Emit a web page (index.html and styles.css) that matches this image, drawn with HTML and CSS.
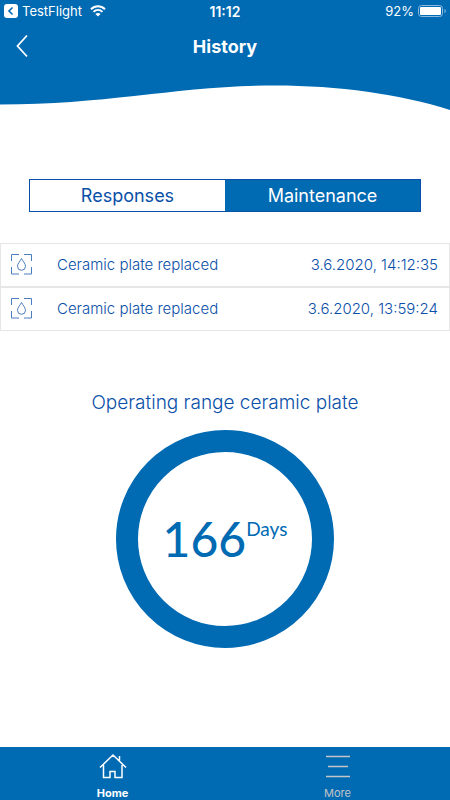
FILE: index.html
```html
<!DOCTYPE html>
<html lang="en">
<head>
    <meta charset="UTF-8">
    <meta name="viewport" content="width=device-width, initial-scale=1.0">
    <title>History</title>
    <link rel="stylesheet" href="styles.css">
</head>
<body>
    <header class="header">
        <div class="status-bar">
            <div class="status-left">
                <svg class="return-icon" viewBox="0 0 14 14" width="14" height="14">
                    <rect width="14" height="14" rx="3" fill="#fff"/>
                    <path d="M8.5 3.5L5 7l3.5 3.5" fill="none" stroke="#006ab3" stroke-width="1.6"/>
                </svg>
                <span>TestFlight</span>
                <svg class="wifi-icon" viewBox="0 0 16 12" width="16" height="12">
                    <path d="M1 4.2C5 .2 11 .2 15 4.2M3.5 6.9c2.6-2.5 6.4-2.5 9 0" fill="none" stroke="#fff" stroke-width="2"/>
                    <path d="M8 11.6L5.4 9c1.4-1.4 3.8-1.4 5.2 0z" fill="#fff"/>
                </svg>
            </div>
            <span class="clock">11:12</span>
            <div class="status-right">
                <span>92%</span>
                <svg viewBox="0 0 28 13" width="28" height="13">
                    <rect x=".5" y=".5" width="24" height="11" rx="3" fill="none" stroke="#8dbbe0"/>
                    <rect x="2" y="2" width="21" height="8" rx="1" fill="#fff"/>
                    <path d="M26.5 4v4c1.7-.6 1.7-3.4 0-4z" fill="#8dbbe0"/>
                </svg>
            </div>
        </div>
        <div class="nav-bar">
            <button class="back-button" type="button" aria-label="Back">
                <svg viewBox="0 0 12 24" width="12" height="24">
                    <path d="M11 1.5L1.5 12 11 22.5" fill="none" stroke="#fff" stroke-width="1.8"/>
                </svg>
            </button>
            <h1>History</h1>
        </div>
    </header>
    <svg class="wave" viewBox="0 0 450 40" preserveAspectRatio="none">
        <path d="M0 0H450V40C400 24 338 15.500 275 15.500C180 15.500 110 34.500 0 34.500Z" fill="#006ab3"/>
    </svg>

    <main>
        <div class="segments">
            <button class="segment" type="button">Responses</button>
            <button class="segment active" type="button">Maintenance</button>
        </div>

        <ul class="log">
            <li class="log-item">
                <svg class="log-icon" viewBox="0 0 21 21" width="21" height="21">
                    <path d="M.5 7V.5H8M13 .5h7.500V7M.5 13v7H8M13 20h7.500V13"/>
                    <path d="M10.500 4.500C9 7.500 6.500 9.700 6.500 12.300a4 4 0 0 0 8 0C14.500 9.700 12 7.500 10.500 4.500z"/>
                </svg>
                <span>Ceramic plate replaced</span>
                <time datetime="2020-06-03T14:12:35">3.6.2020, 14:12:35</time>
            </li>
            <li class="log-item">
                <svg class="log-icon" viewBox="0 0 21 21" width="21" height="21">
                    <path d="M.5 7V.5H8M13 .5h7.500V7M.5 13v7H8M13 20h7.500V13"/>
                    <path d="M10.500 4.500C9 7.500 6.500 9.700 6.500 12.300a4 4 0 0 0 8 0C14.500 9.700 12 7.500 10.500 4.500z"/>
                </svg>
                <span>Ceramic plate replaced</span>
                <time datetime="2020-06-03T13:59:24">3.6.2020, 13:59:24</time>
            </li>
        </ul>

        <section class="range">
            <h2>Operating range ceramic plate</h2>
            <div class="ring">
                <span class="days">166</span>
                <span class="unit">Days</span>
            </div>
        </section>
    </main>

    <nav class="tab-bar">
        <a class="tab active" href="#home">
            <svg viewBox="0 0 28 26" width="28" height="26">
                <path d="M1 14.500L14 2l13 12.500M20.500 7.500V3M4.500 12v12.500h6.500v-6h5v6h7V12" fill="none" stroke="#fff" stroke-width="1.500"/>
            </svg>
            <span>Home</span>
        </a>
        <a class="tab" href="#more">
            <svg viewBox="0 0 28 26" width="28" height="26">
                <path d="M2 3.500h24M4 13.500h20M2 23.500h24" fill="none" stroke="#c3c5c7" stroke-width="1.500"/>
            </svg>
            <span>More</span>
        </a>
    </nav>
</body>
</html>
```
FILE: styles.css
```css
:root {
    --primary-color: #006ab3;
    --text-color: #0a50a8;
    --border-color: #e6e6e6;
}
* {
    box-sizing: border-box;
}
body {
    font-family: Inter, 'Liberation Sans', sans-serif;
    color: var(--text-color);
    background-color: #fff;
    margin: 0;
    min-height: 100vh;
    display: flex;
    flex-direction: column;
}
button {
    font-family: inherit;
    cursor: pointer;
}
.header {
    background-color: var(--primary-color);
    color: #fff;
}
.status-bar {
    display: grid;
    grid-template-columns: 1fr auto 1fr;
    align-items: center;
    height: 22px;
    padding: 0 4px;
    font-size: 13px;
}
.status-left, .status-right {
    display: flex;
    align-items: center;
    gap: 4px;
}
.status-right {
    justify-content: flex-end;
}
.wifi-icon {
    margin-left: 4px;
}
.clock {
    font-size: 14px;
    font-weight: 600;
}
.nav-bar {
    display: grid;
    grid-template-columns: 44px 1fr 44px;
    align-items: center;
    height: 48px;
}
.back-button {
    display: flex;
    justify-content: center;
    background: none;
    border: none;
    padding: 0;
}
h1 {
    margin: 0;
    font-size: 18px;
    font-weight: 700;
    text-align: center;
}
.wave {
    display: block;
    width: 100%;
    height: 40px;
}
main {
    flex: 1;
}
.segments {
    display: flex;
    height: 33px;
    margin: 69px 29px 31px;
    border: 1px solid var(--text-color);
}
.segment {
    flex: 1;
    padding: 0;
    border: none;
    background-color: #fff;
    color: var(--text-color);
    font-size: 18px;
}
.segment.active {
    background-color: var(--primary-color);
    color: #fff;
}
.log {
    list-style: none;
    margin: 0;
    padding: 0;
}
.log-item {
    display: flex;
    align-items: center;
    height: 44px;
    padding: 0 11px 2px 10px;
    border: 1px solid var(--border-color);
    font-size: 15px;
    font-weight: 300;
}
.log-icon {
    margin-right: 25px;
    fill: none;
    stroke: #4a7dbd;
}
.log-item time {
    margin-left: auto;
}
.range {
    display: flex;
    flex-direction: column;
    align-items: center;
    padding-top: 60px;
}
h2 {
    margin: 0 0 15px;
    font-size: 19px;
    line-height: 24px;
    font-weight: 300;
}
.ring {
    display: flex;
    justify-content: center;
    width: 218px;
    height: 218px;
    padding-top: 57px;
    border: 22px solid var(--primary-color);
    border-radius: 50%;
    font-family: Lato, sans-serif;
    color: var(--primary-color);
}
.days {
    font-size: 48px;
    font-weight: 500;
    line-height: 60px;
}
.unit {
    font-size: 19px;
    line-height: 40px;
}
.tab-bar {
    display: flex;
    height: 53px;
    background-color: var(--primary-color);
}
.tab {
    flex: 1;
    display: flex;
    flex-direction: column;
    align-items: center;
    padding-top: 6px;
    color: #c3c5c7;
    font-size: 11px;
    line-height: 14px;
    text-decoration: none;
}
.tab span {
    margin-top: 7px;
}
.tab.active {
    color: #fff;
    font-weight: 700;
}
```
